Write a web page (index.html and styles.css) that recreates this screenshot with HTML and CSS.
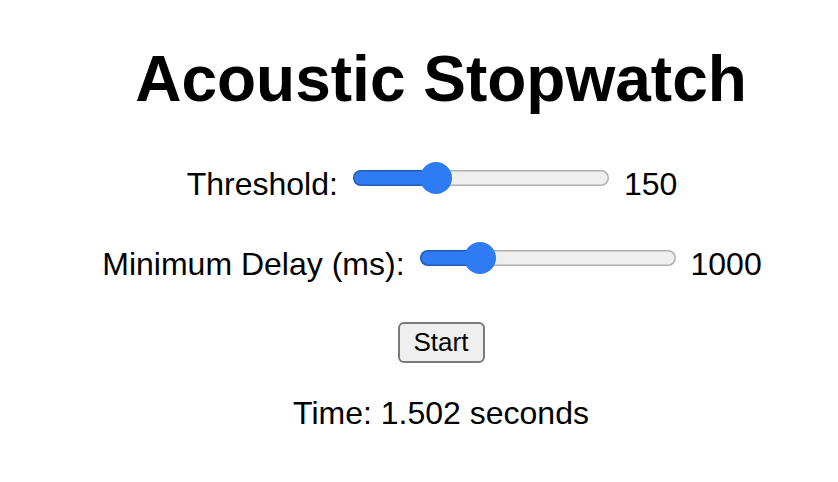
FILE: index.html
```html
<!DOCTYPE html>
<html lang="en">
<head>
<meta charset="utf-8">
<title>Acoustic Stopwatch</title>
<link rel="stylesheet" href="styles.css">
</head>
<body>
<main class="app">
  <h1 class="title">Acoustic Stopwatch</h1>
  <div class="row row-threshold">
    <label class="label" for="threshold">Threshold:</label>
    <input class="slider" id="threshold" type="range" min="0" max="500" value="150" style="--fill: 32.6%">
    <span class="value">150</span>
  </div>
  <div class="row row-delay">
    <label class="label" for="delay">Minimum Delay (ms):</label>
    <input class="slider" id="delay" type="range" min="0" max="5000" value="1000" style="--fill: 24%">
    <span class="value">1000</span>
  </div>
  <div class="actions">
    <button class="btn" type="button">Start</button>
  </div>
  <p class="time">Time: 1.502 seconds</p>
</main>
</body>
</html>
```
FILE: styles.css
```css
html, body {
  margin: 0;
  padding: 0;
  background: #ffffff;
}

body {
  font-family: "Liberation Sans", Arial, sans-serif;
  color: #000000;
}

.app {
  padding-left: 44px;
  text-align: center;
}

.title {
  margin: 42px 0 0 0;
  font-size: 64px;
  font-weight: bold;
  line-height: normal;
}

.row {
  display: flex;
  justify-content: center;
  align-items: center;
  gap: 15px;
  height: 36px;
  font-size: 32px;
  padding-right: 18px;
}

.row-threshold {
  margin-top: 50px;
}

.row-delay {
  margin-top: 44px;
}

.label,
.value {
  line-height: 36px;
  white-space: nowrap;
}

.slider {
  -webkit-appearance: none;
  appearance: none;
  width: 256px;
  height: 32px;
  margin: -12px 0 0 0;
  padding: 0;
  background: transparent;
}

.slider::-webkit-slider-runnable-track {
  height: 16px;
  border-radius: 8px;
  background: linear-gradient(to right, #2f7bf3 var(--fill), #efefef var(--fill));
  box-shadow: inset 0 0 0 1.5px rgba(0, 0, 0, 0.26);
}

.slider::-webkit-slider-thumb {
  -webkit-appearance: none;
  appearance: none;
  width: 32px;
  height: 32px;
  border-radius: 50%;
  background: #2f7bf3;
  border: none;
  margin-top: -8px;
}

.actions {
  margin-top: 40px;
  display: flex;
  justify-content: center;
}

.btn {
  font-family: "Liberation Sans", Arial, sans-serif;
  font-size: 26px;
  height: 41px;
  width: 87px;
  padding: 0;
  color: #000000;
  background: #efefef;
  border: 2px solid #7a7a7a;
  border-radius: 6px;
}

.time {
  margin: 32px 0 0 0;
  font-size: 32px;
  line-height: 36px;
}
```
